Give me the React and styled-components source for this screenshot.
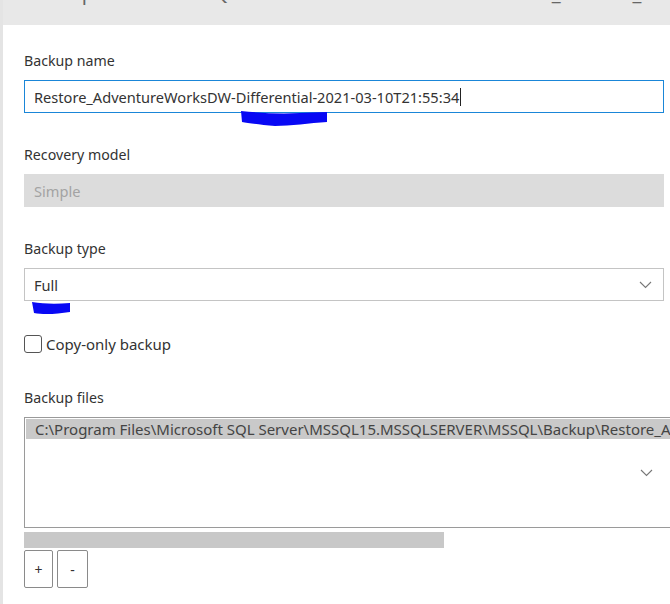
import React from 'react';
import styled, { createGlobalStyle } from 'styled-components';

const GlobalStyle = createGlobalStyle`
  html, body {
    margin: 0;
    padding: 0;
    background: #ffffff;
    overflow: hidden;
  }
  body {
    font-family: "Noto Sans", "Open Sans", "Liberation Sans", sans-serif;
    color: #323130;
  }
`;

const Frame = styled.div`
  width: 670px;
  height: 604px;
  display: flex;
  flex-direction: column;
  border-left: 3px solid #e4e4e4;
  box-sizing: border-box;
  background: #fff;
  overflow: hidden;
  position: relative;
`;

const Header = styled.div`
  height: 25px;
  flex: none;
  background: #e8e8e8;
  overflow: hidden;
  padding-left: 22px;
`;

const Title = styled.div`
  font-size: 20px;
  line-height: 28px;
  margin-top: -21.5px;
  color: #666;
  white-space: nowrap;
`;

const Body = styled.div`
  display: flex;
  flex-direction: column;
  padding: 27px 0 0 21px;
`;

const Field = styled.div`
  display: flex;
  flex-direction: column;
  margin-bottom: ${(p) => p.gap || 0}px;
`;

const Label = styled.div`
  font-size: 14.2px;
  line-height: 18px;
  color: #333;
  margin-bottom: 10px;
`;

const TextBox = styled.div`
  position: relative;
  height: 33px;
  width: 640px;
  box-sizing: border-box;
  display: flex;
  align-items: center;
  padding-left: 9px;
  font-size: 14.6px;
  color: ${(p) => (p.disabled ? '#a3a3a3' : '#333')};
  background: ${(p) => (p.disabled ? '#dcdcdc' : '#fff')};
  border: 1px solid ${(p) => (p.focused ? '#1a86d8' : p.disabled ? '#dcdcdc' : '#c4c4c4')};
`;

const Caret = styled.span`
  display: inline-block;
  width: 1px;
  height: 18px;
  background: #222;
  margin-left: 1px;
`;

const Chevron = styled.svg`
  position: absolute;
  right: ${(p) => p.right}px;
  top: ${(p) => p.top}px;
`;

const CheckRow = styled.label`
  display: flex;
  align-items: center;
  gap: 4px;
  height: 18px;
  font-size: 15px;
  color: #333;
  margin: 34px 0 36px;
`;

const Box = styled.span`
  width: 18px;
  height: 18px;
  box-sizing: border-box;
  border: 1px solid #555;
  border-radius: 3px;
`;

const ListBox = styled.div`
  position: relative;
  width: 660px;
  height: 111px;
  box-sizing: border-box;
  border: 1px solid #9a9a9a;
  border-right: none;
  padding: 1px 0 0 1px;
`;

const ListItem = styled.div`
  height: 20px;
  display: flex;
  align-items: center;
  padding-left: 9px;
  background: ${(p) => (p.selected ? '#c9c9c9' : 'transparent')};
  font-size: 15px;
  color: #444;
  white-space: nowrap;
  overflow: hidden;
`;

const ScrollBar = styled.div`
  width: 420px;
  height: 16px;
  background: #c8c8c8;
  margin-top: 4px;
`;

const ButtonRow = styled.div`
  display: flex;
  gap: 4px;
  margin-top: 2px;
`;

const SmallButton = styled.button`
  width: ${(p) => p.w || 29}px;
  height: 38px;
  padding: 0;
  background: #fff;
  border: 1px solid #8a8a8a;
  border-radius: 2px;
  font-family: inherit;
  font-size: 14px;
  color: #333;
`;

const Scribble = styled.svg`
  position: absolute;
  pointer-events: none;
`;

const ChevronIcon = ({ top = 12, right = 11 }) => (
  <Chevron top={top} right={right} width="13" height="8" viewBox="0 0 13 8">
    <path d="M1 1 L6.5 6.5 L12 1" fill="none" stroke="#777" strokeWidth="1.1" />
  </Chevron>
);

export default function App() {
  return (
    <>
      <GlobalStyle />
      <Frame>
        <Header>
          <Title>Backup database - SQLServer2019 - AdventureWorksDW_Restore_Diff_Test</Title>
        </Header>
        <Body>
          <Field gap={33}>
            <Label>Backup name</Label>
            <TextBox focused>
              Restore_AdventureWorksDW-Differential-2021-03-10T21:55:34
              <Caret />
            </TextBox>
          </Field>
          <Field gap={33}>
            <Label>Recovery model</Label>
            <TextBox disabled>Simple</TextBox>
          </Field>
          <Field>
            <Label>Backup type</Label>
            <TextBox>
              Full
              <ChevronIcon />
            </TextBox>
          </Field>
          <CheckRow>
            <Box />
            Copy-only backup
          </CheckRow>
          <Field>
            <Label>Backup files</Label>
            <ListBox>
              <ListItem selected>
                C:\Program Files\Microsoft SQL Server\MSSQL15.MSSQLSERVER\MSSQL\Backup\Restore_AdventureWorksDW-Differential-2021-03-10T21:55:34.bak
              </ListItem>
              <ChevronIcon top={51} right={31} />
            </ListBox>
            <ScrollBar />
            <ButtonRow>
              <SmallButton>+</SmallButton>
              <SmallButton w={31}>-</SmallButton>
            </ButtonRow>
          </Field>
        </Body>
        <Scribble style={{ left: 237, top: 110 }} width="88" height="18" viewBox="0 0 88 18">
          <path d="M1 1 C20 3 40 4 60 3 L87 2 L87 12 C70 13 50 16 35 16 C20 15 8 13 2 12 Z" fill="#0808f4" />
        </Scribble>
        <Scribble style={{ left: 29, top: 301 }} width="40" height="16" viewBox="0 0 40 16">
          <path d="M0 1 C12 3 25 3 38 2 L38 11 C25 13 12 14 2 12 Z" fill="#0808f4" />
        </Scribble>
      </Frame>
    </>
  );
}
